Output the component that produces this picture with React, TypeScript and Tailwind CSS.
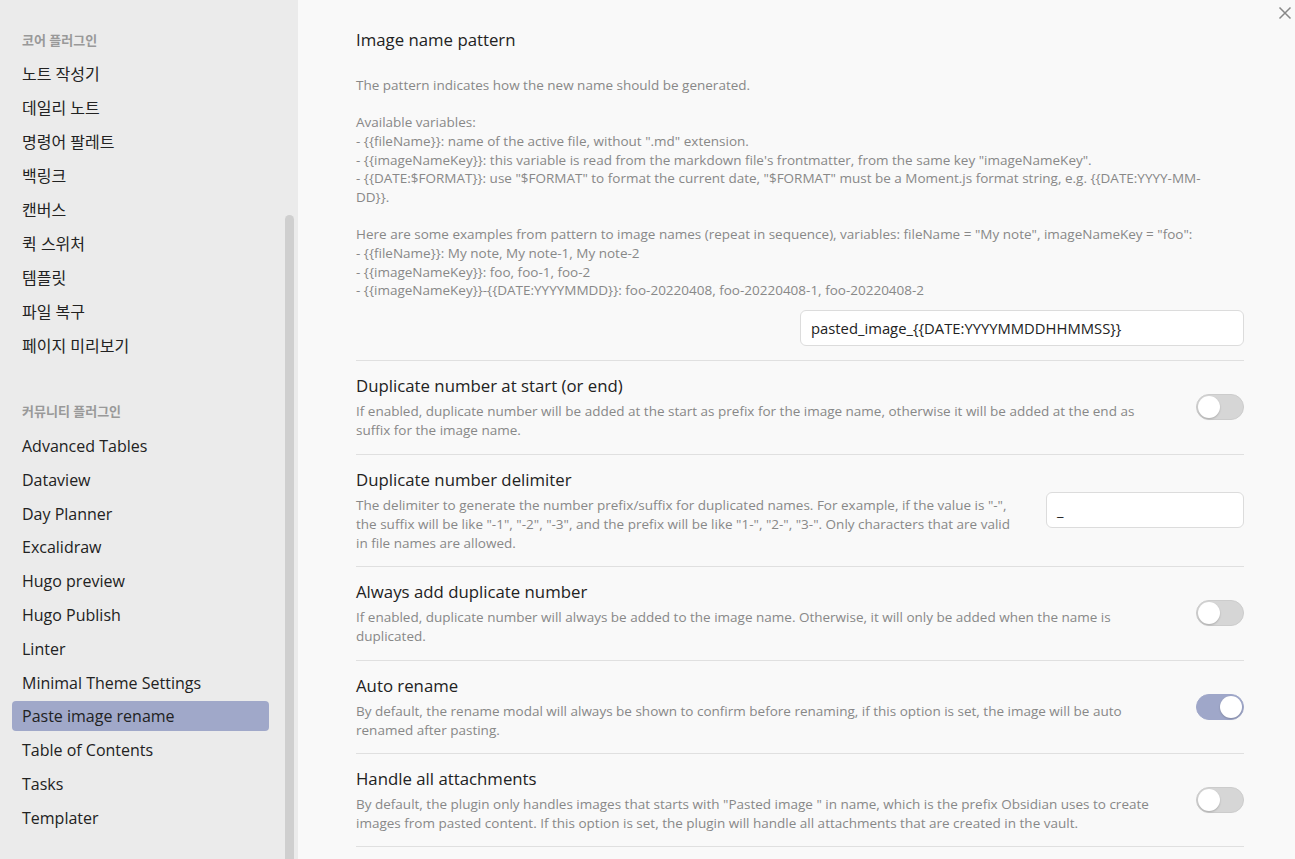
import React from 'react'

const coreItems = ['노트 작성기', '데일리 노트', '명령어 팔레트', '백링크', '캔버스', '퀵 스위처', '템플릿', '파일 복구', '페이지 미리보기']

const communityItems = [
  'Advanced Tables',
  'Dataview',
  'Day Planner',
  'Excalidraw',
  'Hugo preview',
  'Hugo Publish',
  'Linter',
  'Minimal Theme Settings',
  'Paste image rename',
  'Table of Contents',
  'Tasks',
  'Templater',
]

const patternDesc = `
The pattern indicates how the new name should be generated.

Available variables:
- {{fileName}}: name of the active file, without ".md" extension.
- {{imageNameKey}}: this variable is read from the markdown file's frontmatter, from the same key "imageNameKey".
- {{DATE:$FORMAT}}: use "$FORMAT" to format the current date, "$FORMAT" must be a Moment.js format string, e.g. {{DATE:YYYY-MM-
DD}}.

Here are some examples from pattern to image names (repeat in sequence), variables: fileName = "My note", imageNameKey = "foo":
- {{fileName}}: My note, My note-1, My note-2
- {{imageNameKey}}: foo, foo-1, foo-2
- {{imageNameKey}}-{{DATE:YYYYMMDD}}: foo-20220408, foo-20220408-1, foo-20220408-2`

const font = "font-['Open_Sans','Noto_Sans_CJK_KR',sans-serif]"

function Toggle({ on }: { on?: boolean }) {
  return (
    <div
      className={`relative w-[48px] h-[26px] rounded-full border ${
        on ? 'bg-[#9fa7c9] border-[#9fa7c9]' : 'bg-[#d6d6d6] border-[#cccccc]'
      }`}
    >
      <div
        className={`absolute top-[1px] w-[22px] h-[22px] rounded-full bg-white shadow-[0_1px_2px_rgba(0,0,0,0.2)] ${
          on ? 'right-[1px]' : 'left-[1px]'
        }`}
      />
    </div>
  )
}

function SettingRow({
  name,
  lines,
  children,
}: {
  name: string
  lines: string[]
  children: React.ReactNode
}) {
  return (
    <div className="flex items-center border-t border-[#e0e0e0] py-[13px]">
      <div className="flex-1 mr-4">
        <div className="text-[16.8px] leading-[24px] text-[#222]">{name}</div>
        <div className="pt-[4px] text-[13.5px] leading-[19.2px] text-[#888]">
          {lines.map((l, i) => (
            <div key={i} className="whitespace-nowrap">
              {l}
            </div>
          ))}
        </div>
      </div>
      <div className="flex justify-end">{children}</div>
    </div>
  )
}

export default function App() {
  return (
    <div className={`flex w-[1295px] h-[859px] overflow-hidden bg-[#f9f9f9] ${font}`}>
      {/* Sidebar */}
      <aside className="relative w-[298px] shrink-0 bg-[#ebebeb] px-[12px]">
        <div className="w-[257px]">
          <div className="mt-[30px] mb-[9px] pl-[10px] text-[13px] leading-[20px] font-semibold text-[#999]">
            코어 플러그인
          </div>
          {coreItems.map((item) => (
            <div key={item} className="h-[30px] mb-[4px] pl-[10px] text-[16px] leading-[30px] text-[#222] rounded-[4px]">
              {item}
            </div>
          ))}
          <div className="mt-[40px] mb-[10px] pl-[10px] text-[13px] leading-[20px] font-semibold text-[#999]">
            커뮤니티 플러그인
          </div>
          {communityItems.map((item) => (
            <div
              key={item}
              className={`h-[30px] mb-[3.8px] pl-[10px] text-[16px] leading-[30px] text-[#222] rounded-[4px] ${
                item === 'Paste image rename' ? 'bg-[#a0a8c9]' : ''
              }`}
            >
              {item}
            </div>
          ))}
        </div>
        {/* scrollbar thumb */}
        <div className="absolute left-[285px] top-[215px] w-[9px] h-[700px] rounded-full bg-[#cfcfcf]" />
      </aside>

      {/* Main */}
      <main className="relative flex-1 pl-[58px] pr-[51px] pt-[15px]">
        <button className="absolute right-[3px] top-[6px] w-[14px] h-[14px] text-[#888]">
          <svg viewBox="0 0 14 14" width="14" height="14" fill="none" stroke="currentColor" strokeWidth="1.5">
            <path d="M1.5 1.5 L12.5 12.5 M12.5 1.5 L1.5 12.5" />
          </svg>
        </button>

        <div className="pt-[13px] pb-[14px]">
          <div className="text-[16.8px] leading-[24px] text-[#222]">Image name pattern</div>
          <div className="pt-[5px] text-[13.5px] leading-[18.7px] text-[#888] whitespace-pre">{patternDesc}</div>
          <div className="flex justify-end mt-[10px]">
            <div className="w-[444px] h-[36px] rounded-[6px] border border-[#dcdcdc] bg-white px-[10px] text-[14.8px] leading-[34px] text-[#222]">
              pasted_image_{'{{'}DATE:YYYYMMDDHHMMSS{'}}'}
            </div>
          </div>
        </div>

        <SettingRow
          name="Duplicate number at start (or end)"
          lines={[
            'If enabled, duplicate number will be added at the start as prefix for the image name, otherwise it will be added at the end as',
            'suffix for the image name.',
          ]}
        >
          <Toggle />
        </SettingRow>

        <SettingRow
          name="Duplicate number delimiter"
          lines={[
            'The delimiter to generate the number prefix/suffix for duplicated names. For example, if the value is "-",',
            'the suffix will be like "-1", "-2", "-3", and the prefix will be like "1-", "2-", "3-". Only characters that are valid',
            'in file names are allowed.',
          ]}
        >
          <div className="w-[198px] h-[36px] rounded-[6px] border border-[#dcdcdc] bg-white px-[10px] text-[14.8px] leading-[34px] text-[#222]">
            _
          </div>
        </SettingRow>

        <SettingRow
          name="Always add duplicate number"
          lines={[
            'If enabled, duplicate number will always be added to the image name. Otherwise, it will only be added when the name is',
            'duplicated.',
          ]}
        >
          <Toggle />
        </SettingRow>

        <SettingRow
          name="Auto rename"
          lines={[
            'By default, the rename modal will always be shown to confirm before renaming, if this option is set, the image will be auto',
            'renamed after pasting.',
          ]}
        >
          <Toggle on />
        </SettingRow>

        <SettingRow
          name="Handle all attachments"
          lines={[
            'By default, the plugin only handles images that starts with "Pasted image " in name, which is the prefix Obsidian uses to create',
            'images from pasted content. If this option is set, the plugin will handle all attachments that are created in the vault.',
          ]}
        >
          <Toggle />
        </SettingRow>
        <div className="border-t border-[#e0e0e0]" />
      </main>
    </div>
  )
}
